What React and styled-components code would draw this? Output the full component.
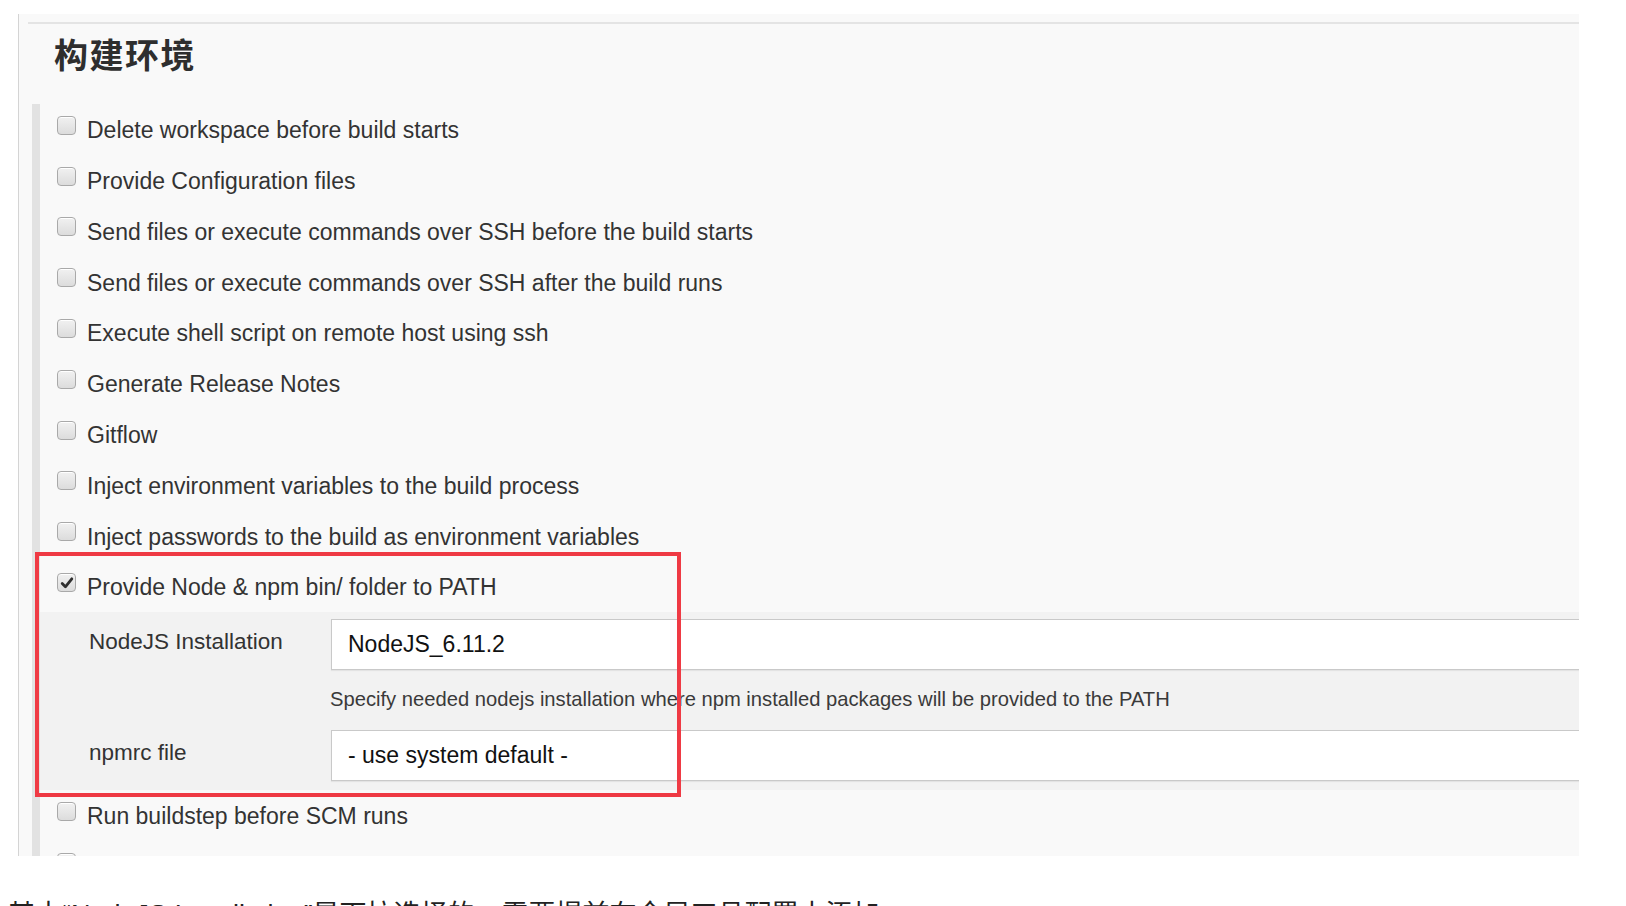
import React from "react";
import styled, { createGlobalStyle } from "styled-components";

const GlobalStyle = createGlobalStyle`
  html, body {
    margin: 0;
    padding: 0;
    background: #ffffff;
  }
  body {
    font-family: "Liberation Sans", Arial, sans-serif;
    color: #333;
  }
`;

const beforeOptions = [
  "Delete workspace before build starts",
  "Provide Configuration files",
  "Send files or execute commands over SSH before the build starts",
  "Send files or execute commands over SSH after the build runs",
  "Execute shell script on remote host using ssh",
  "Generate Release Notes",
  "Gitflow",
  "Inject environment variables to the build process",
  "Inject passwords to the build as environment variables",
];

const afterOptions = [
  "Run buildstep before SCM runs",
  "Set Jenkins user build variables",
];

function CheckMark() {
  return (
    <svg width="14" height="14" viewBox="0 0 14 14">
      <path
        d="M2.2 7.6 L5.4 10.8 L11.8 2.8"
        fill="none"
        stroke="#2f2f2f"
        strokeWidth="2.8"
        strokeLinecap="round"
        strokeLinejoin="round"
      />
    </svg>
  );
}

function OptionRow({ label, checked }) {
  return (
    <Row>
      <Box $checked={checked}>{checked && <CheckMark />}</Box>
      <RowLabel>{label}</RowLabel>
    </Row>
  );
}

function App() {
  return (
    <>
      <GlobalStyle />
      <Page>
        <Panel>
          <Header>
            <Title>构建环境</Title>
          </Header>
          <Section>
            {beforeOptions.map((label) => (
              <OptionRow key={label} label={label} />
            ))}
            <OptionRow label="Provide Node & npm bin/ folder to PATH" checked />
            <Nested>
              <Field>
                <FieldLabel>NodeJS Installation</FieldLabel>
                <Select>NodeJS_6.11.2</Select>
              </Field>
              <Help>
                Specify needed nodejs installation where npm installed packages
                will be provided to the PATH
              </Help>
              <Field>
                <FieldLabel>npmrc file</FieldLabel>
                <Select>- use system default -</Select>
              </Field>
            </Nested>
            {afterOptions.map((label) => (
              <OptionRow key={label} label={label} />
            ))}
          </Section>
          <Highlight />
        </Panel>
        <Note>
          其中“NodeJS Installation”是下拉选择的，需要提前在全局工具配置中添加
        </Note>
      </Page>
    </>
  );
}

const Page = styled.div`
  padding-top: 14px;
  height: 892px;
  overflow: hidden;
`;

const Panel = styled.div`
  position: relative;
  margin-left: 18px;
  width: 1561px;
  height: 842px;
  overflow: hidden;
  background: #f9f9f9;
  border-left: 1px solid #d4d4d4;
  padding-top: 8px;
  box-sizing: border-box;
`;

const Header = styled.div`
  margin-left: 9px;
  border-top: 2px solid #e4e4e4;
  height: 80px;
`;

const Title = styled.h2`
  margin: 0;
  padding: 12px 0 0 26px;
  font-family: "Noto Sans CJK SC", sans-serif;
  font-size: 34px;
  line-height: 35px;
  font-weight: 700;
  color: #2e2e2e;
  letter-spacing: 1.5px;
`;

const Section = styled.div`
  margin-left: 13px;
  border-left: 8px solid #e2e2e2;
`;

const Row = styled.div`
  height: 50.8px;
  display: flex;
  align-items: center;
  padding-left: 17px;
`;

const Box = styled.span`
  width: 17px;
  height: 17px;
  margin-bottom: 8px;
  border: 1px solid #a9a9a9;
  border-radius: 4px;
  background: linear-gradient(#f1f1f1, #dcdcdc);
  box-shadow: inset 0 1px 0 #fff;
  display: flex;
  align-items: center;
  justify-content: center;
  flex-shrink: 0;
`;

const RowLabel = styled.span`
  margin-left: 11px;
  padding-top: 2px;
  font-size: 23px;
  line-height: 1.15;
  color: #333;
  white-space: nowrap;
`;

const Nested = styled.div`
  background: #f2f2f2;
  padding: 7px 0 9px;
`;

const Field = styled.div`
  display: flex;
  align-items: center;
`;

const FieldLabel = styled.div`
  width: 242px;
  padding-left: 49px;
  padding-bottom: 4px;
  font-size: 22.5px;
  color: #333;
  white-space: nowrap;
`;

const Select = styled.div`
  flex: 1;
  margin-right: -12px;
  height: 51px;
  box-sizing: border-box;
  display: flex;
  align-items: center;
  padding-left: 16px;
  background: #fff;
  border: 1px solid #c9c9c9;
  box-shadow: 0 1px 1px rgba(0, 0, 0, 0.06);
  font-size: 23px;
  color: #111;
`;

const Help = styled.div`
  height: 60px;
  display: flex;
  align-items: center;
  padding-left: 290px;
  font-size: 20.2px;
  color: #3a3a3a;
  white-space: nowrap;
`;

const Highlight = styled.div`
  position: absolute;
  left: 16px;
  top: 538px;
  width: 646px;
  height: 245px;
  box-sizing: border-box;
  border: 4px solid #ef3a44;
  pointer-events: none;
`;

const Note = styled.p`
  margin: 41px 0 0;
  padding-left: 8px;
  font-family: "Liberation Sans", "Noto Sans CJK SC", sans-serif;
  font-size: 27px;
  line-height: 36px;
  color: #222;
  white-space: nowrap;
`;

export default App;
